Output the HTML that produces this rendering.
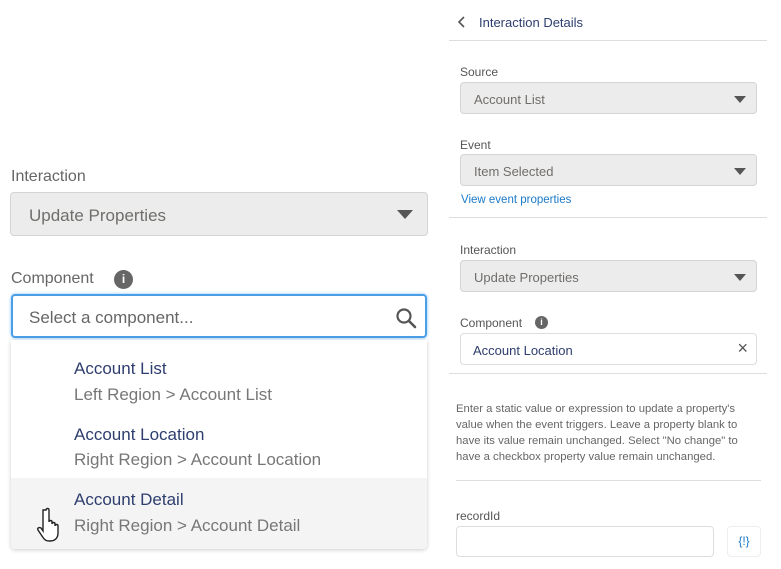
<!DOCTYPE html>
<html><head><style>
body{margin:0;width:781px;height:569px;background:#fff;font-family:"Liberation Sans",sans-serif;position:relative;overflow:hidden;color:#3e3e3c}
.a{position:absolute}
.sel{position:absolute;background:#ececec;border:1px solid #d4d4d4;border-radius:4px;box-sizing:border-box;color:#706e6b}
.tri{position:absolute;width:0;height:0;border-left:6px solid transparent;border-right:6px solid transparent;border-top:7px solid #555}
.lbl{position:absolute;font-size:12px;color:#555}
.hr{position:absolute;height:1px;background:#ddd}
</style></head><body>
<!-- left -->
<div class="a" style="left:11px;top:168px;font-size:16px;color:#666">Interaction</div>
<div class="sel" style="left:10px;top:192px;width:418px;height:44px;font-size:17px;padding:13px 0 0 18px">Update Properties<div class="tri" style="right:14px;top:17px;border-left-width:8px;border-right-width:8px;border-top-width:9px"></div></div>
<div class="a" style="left:11px;top:270px;font-size:16px;color:#666">Component</div>
<div class="a" style="left:114px;top:270px;width:19px;height:19px;border-radius:50%;background:#666;color:#fff;font-size:12px;font-weight:bold;text-align:center;line-height:19px">i</div>
<div class="a" style="left:11px;top:294px;width:416px;height:44px;box-sizing:border-box;border:2px solid #4a9ee6;border-radius:4px;box-shadow:0 0 3px #8cc4f5;font-size:17px;color:#666;padding:12px 0 0 16px">Select a component...
<svg class="a" style="right:8px;top:11px" width="22" height="22" viewBox="0 0 22 22"><circle cx="9" cy="9" r="6.5" fill="none" stroke="#555" stroke-width="2.2"/><line x1="14" y1="14" x2="20" y2="20" stroke="#555" stroke-width="2.6" stroke-linecap="round"/></svg></div>
<div class="a" style="left:11px;top:340px;width:416px;height:209px;background:#fff;box-shadow:0 1px 4px rgba(0,0,0,.2);border-radius:0 0 4px 4px;overflow:hidden">
<div class="a" style="left:0;top:138px;width:416px;height:71px;background:#f4f4f4"></div>
<div class="a" style="left:63px;top:19px;font-size:17px;color:#2e3e6e">Account List</div>
<div class="a" style="left:63px;top:45px;font-size:17px;color:#777">Left Region &gt; Account List</div>
<div class="a" style="left:63px;top:85px;font-size:17px;color:#2e3e6e">Account Location</div>
<div class="a" style="left:63px;top:110px;font-size:17px;color:#777">Right Region &gt; Account Location</div>
<div class="a" style="left:63px;top:150px;font-size:17px;color:#2e3e6e">Account Detail</div>
<div class="a" style="left:63px;top:176px;font-size:17px;color:#777">Right Region &gt; Account Detail</div>
<svg class="a" style="left:26px;top:167px" width="28" height="36" viewBox="0 0 28 36"><path d="M9 3c0-2 3-2 3 0v12c0-2 3-2 3 0v2c0-2 3-2 3 0v2c0-2 3-2 3 0v7c0 5-3 8-8 8s-6-2-8-5l-4-6c-1-2 1-3 3-2l2 3V3z" fill="#fff" stroke="#222" stroke-width="1.4"/></svg>
</div>
<!-- right -->
<svg class="a" style="left:457px;top:15px" width="10" height="14" viewBox="0 0 10 14"><path d="M7 2L2 7l5 5" fill="none" stroke="#555" stroke-width="1.6"/></svg>
<div class="a" style="left:479px;top:15px;font-size:13px;color:#2e3e6e">Interaction Details</div>
<div class="hr" style="left:449px;top:40px;width:318px"></div>
<div class="lbl" style="left:460px;top:65px">Source</div>
<div class="sel" style="left:460px;top:82px;width:297px;height:32px;font-size:13px;padding:9px 0 0 13px">Account List<div class="tri" style="right:10px;top:13px"></div></div>
<div class="lbl" style="left:460px;top:138px">Event</div>
<div class="sel" style="left:460px;top:154px;width:297px;height:32px;font-size:13px;padding:9px 0 0 13px">Item Selected<div class="tri" style="right:10px;top:13px"></div></div>
<div class="a" style="left:461px;top:194px;font-size:11.5px;color:#1b7ac8">View event properties</div>
<div class="hr" style="left:449px;top:217px;width:318px"></div>
<div class="lbl" style="left:460px;top:243px">Interaction</div>
<div class="sel" style="left:460px;top:260px;width:297px;height:32px;font-size:13px;padding:9px 0 0 13px">Update Properties<div class="tri" style="right:10px;top:13px"></div></div>
<div class="lbl" style="left:460px;top:316px">Component</div>
<div class="a" style="left:535px;top:316px;width:13px;height:13px;border-radius:50%;background:#666;color:#fff;font-size:9px;font-weight:bold;text-align:center;line-height:13px">i</div>
<div class="a" style="left:460px;top:333px;width:297px;height:32px;box-sizing:border-box;border:1px solid #ddd;border-radius:4px;font-size:13px;color:#2e3e6e;padding:9px 0 0 12px">Account Location<div class="a" style="right:8px;top:4px;font-size:18px;color:#555">&times;</div></div>
<div class="hr" style="left:449px;top:373px;width:318px"></div>
<div class="a" style="left:456px;top:401px;width:300px;font-size:11.3px;line-height:16px;color:#666">Enter a static value or expression to update a property's value when the event triggers. Leave a property blank to have its value remain unchanged. Select "No change" to have a checkbox property value remain unchanged.</div>
<div class="hr" style="left:456px;top:480px;width:305px"></div>
<div class="lbl" style="left:456px;top:509px">recordId</div>
<div class="a" style="left:456px;top:526px;width:258px;height:31px;box-sizing:border-box;border:1px solid #ddd;border-radius:4px"></div>
<div class="a" style="left:727px;top:526px;width:34px;height:31px;box-sizing:border-box;border:1px solid #eee;border-radius:4px;font-size:12px;color:#1b7ac8;text-align:center;line-height:29px">{!}</div>
</body></html>
